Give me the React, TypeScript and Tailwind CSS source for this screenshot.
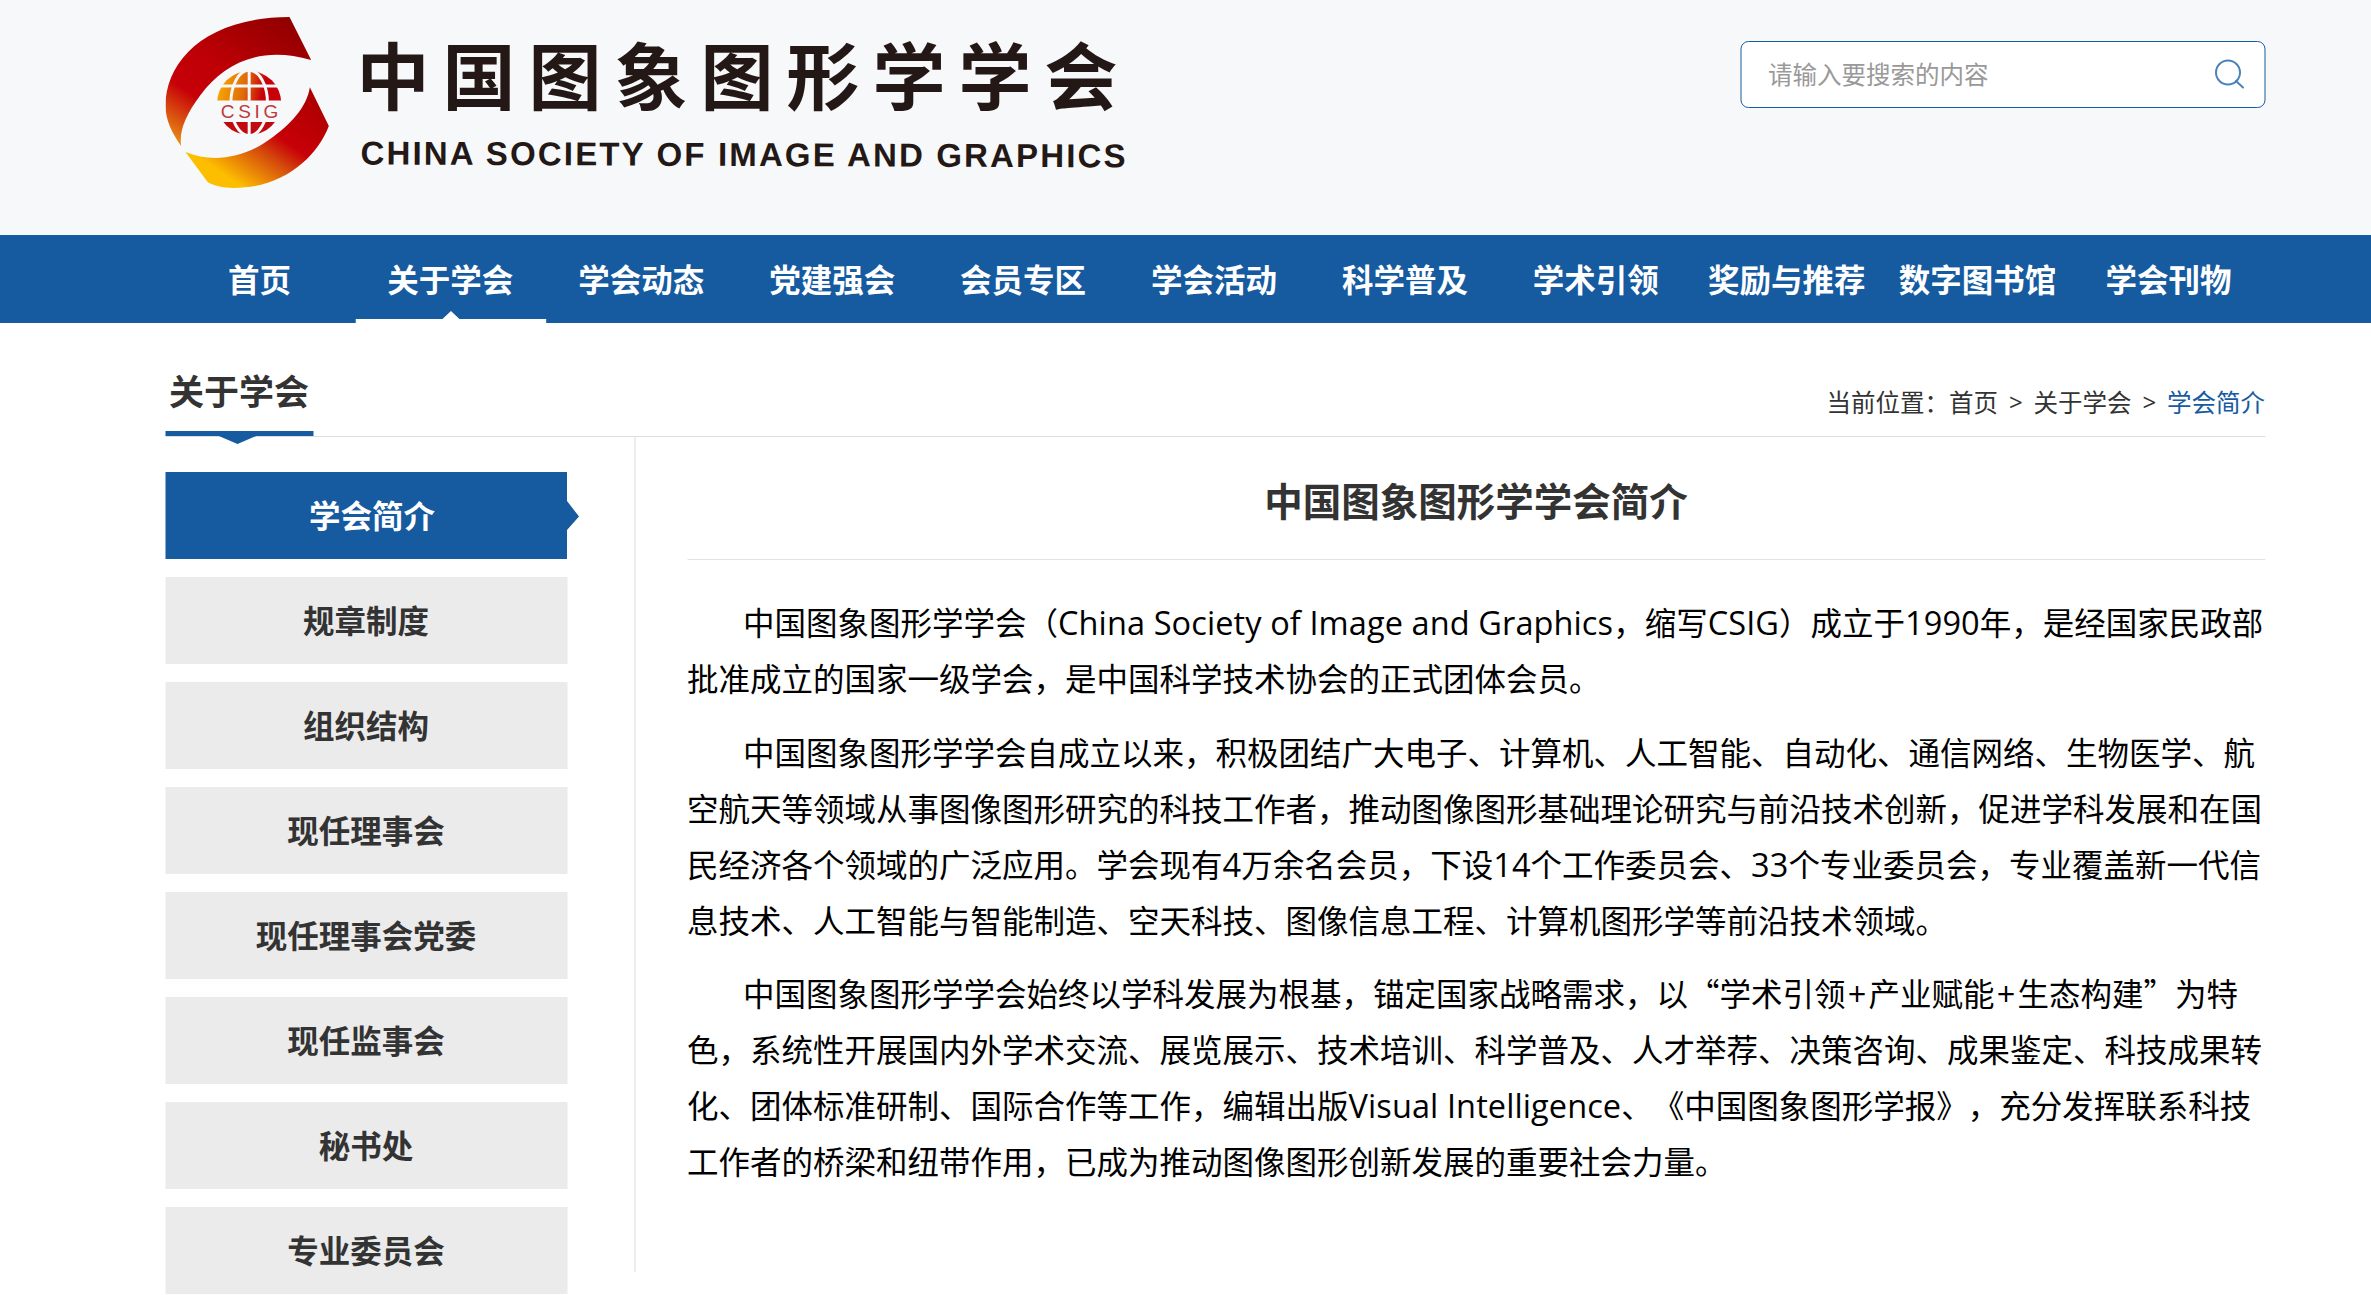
import React from 'react';

const navItems = ['首页', '关于学会', '学会动态', '党建强会', '会员专区', '学会活动', '科学普及', '学术引领', '奖励与推荐', '数字图书馆', '学会刊物'];

const sideItems = ['学会简介', '规章制度', '组织结构', '现任理事会', '现任理事会党委', '现任监事会', '秘书处', '专业委员会'];

function Latin({ children }: { children: React.ReactNode }) {
  return <span className="font-['Open_Sans','Noto_Sans_CJK_SC',sans-serif] text-[32.5px] leading-none tracking-[0.1px]">{children}</span>;
}

function Plus() {
  return <span className="px-[2.2px] font-['Open_Sans',sans-serif] text-[32.5px] leading-none">+</span>;
}

const paragraphs: React.ReactNode[][] = [
  [
    <>中国图象图形学学会（<Latin>China Society of Image and Graphics</Latin>，缩写<Latin>CSIG</Latin>）成立于<Latin>1990</Latin>年，是经国家民政部</>,
    '批准成立的国家一级学会，是中国科学技术协会的正式团体会员。',
  ],
  [
    '中国图象图形学学会自成立以来，积极团结广大电子、计算机、人工智能、自动化、通信网络、生物医学、航',
    '空航天等领域从事图像图形研究的科技工作者，推动图像图形基础理论研究与前沿技术创新，促进学科发展和在国',
    <>民经济各个领域的广泛应用。学会现有<Latin>4</Latin>万余名会员，下设<Latin>14</Latin>个工作委员会、<Latin>33</Latin>个专业委员会，专业覆盖新一代信</>,
    '息技术、人工智能与智能制造、空天科技、图像信息工程、计算机图形学等前沿技术领域。',
  ],
  [
    <>中国图象图形学学会始终以学科发展为根基，锚定国家战略需求，以“学术引领<Plus />产业赋能<Plus />生态构建”为特</>,
    '色，系统性开展国内外学术交流、展览展示、技术培训、科学普及、人才举荐、决策咨询、成果鉴定、科技成果转',
    <>化、团体标准研制、国际合作等工作，编辑出版<Latin>Visual Intelligence</Latin>、《中国图象图形学报》，充分发挥联系科技</>,
    '工作者的桥梁和纽带作用，已成为推动图像图形创新发展的重要社会力量。',
  ],
];

function Logo() {
  return (
    <svg className="block h-[200px] w-[1000px]" viewBox="0 0 1000 200">
      <defs>
        <linearGradient id="upper" gradientUnits="userSpaceOnUse" x1="400" y1="60" x2="130" y2="460">
          <stop offset="0" stopColor="#930000" />
          <stop offset="0.45" stopColor="#bd0005" />
          <stop offset="0.7" stopColor="#c60008" />
          <stop offset="1" stopColor="#e88a14" />
        </linearGradient>
        <linearGradient id="lower" gradientUnits="userSpaceOnUse" x1="470" y1="290" x2="270" y2="580">
          <stop offset="0" stopColor="#ae0000" />
          <stop offset="0.42" stopColor="#c80008" />
          <stop offset="0.6" stopColor="#d4480c" />
          <stop offset="0.95" stopColor="#fdbe00" />
        </linearGradient>
        <linearGradient id="globe" gradientUnits="userSpaceOnUse" x1="215" y1="240" x2="370" y2="270">
          <stop offset="0" stopColor="#f6a000" />
          <stop offset="0.45" stopColor="#e06a0a" />
          <stop offset="0.8" stopColor="#c80008" />
        </linearGradient>
        <clipPath id="cap">
          <rect x="190" y="205" width="220" height="97" />
        </clipPath>
        <clipPath id="base">
          <rect x="190" y="366" width="220" height="50" />
        </clipPath>
      </defs>
      <g transform="translate(-15 0) scale(0.33333)">
        <path fill="url(#upper)" d="M417 51L482 180C330 135 220 190 150 285C105 345 85 395 92 438C65 400 45 360 45 318C45 180 170 51 417 51Z" />
        <path fill="url(#lower)" d="M478 262L535 378C500 470 400 564 250 564C215 564 190 557 172 547L105 456C180 488 270 475 340 430C420 378 470 320 478 262Z" />
        <circle cx="296" cy="309" r="96" fill="url(#globe)" clipPath="url(#cap)" />
        <circle cx="296" cy="309" r="96" fill="#c00a10" clipPath="url(#base)" />
        <g fill="none" stroke="#f6f8fa" strokeWidth="9">
          <path d="M296 205V302M296 362V410M195 258H400" />
          <ellipse cx="296" cy="309" rx="55" ry="98" />
        </g>
        <rect x="195" y="302" width="205" height="64" fill="#f6f8fa" />
        <text x="211" y="355" fontSize="57" textLength="172" fill="#bf3a3c" fontFamily="Liberation Sans, sans-serif">CSIG</text>
      </g>
      <g fill="#231815">
        <text x="191" y="104" fontSize="73" fontWeight="700" textLength="761" fontFamily="Noto Sans CJK SC, sans-serif">中国图象图形学学会</text>
        <text x="195" y="164.500" fontSize="33" fontWeight="700" textLength="765" transform="rotate(0.22 195 165)" fontFamily="Liberation Sans, sans-serif">CHINA SOCIETY OF IMAGE AND GRAPHICS</text>
      </g>
    </svg>
  );
}

export default function App() {
  return (
    <div className="h-[1295px] w-full overflow-hidden bg-white font-['Noto_Sans_CJK_SC',sans-serif] text-[#333] [text-spacing-trim:space-all]">
      <header className="h-[235px] bg-[#f6f8fa]">
        <div className="mx-auto flex w-[2100px] translate-x-[29.5px] justify-between">
          <Logo />
          <div className="mt-[41px] flex h-[67px] w-[525px] items-center justify-between rounded-[8px] border border-[#165aa0] bg-white pr-[20px] pb-[2px] pl-[27px]">
            <span className="text-[24.5px] leading-[36px] text-[#999]">请输入要搜索的内容</span>
            <svg className="size-[30px]" viewBox="0 0 30 30" fill="none" stroke="#4a82bb" strokeWidth="2">
              <ellipse cx="13.5" cy="13.5" rx="12" ry="12" />
              <path d="M21.5 22L28.5 28.5" strokeLinecap="round" />
            </svg>
          </div>
        </div>
      </header>

      <nav className="h-[88px] bg-[#165aa0]">
        <ul className="mx-auto grid h-full w-[2100px] translate-x-[29.5px] grid-cols-11">
          {navItems.map((t, i) => (
            <li key={t} className="relative flex items-center justify-center text-[31.5px] font-bold whitespace-nowrap text-white">
              <span className="-translate-x-[1px]">{t}</span>
              {i === 1 && (
                <svg className="absolute bottom-0 left-0 h-[12px] w-full" viewBox="0 0 191 12" preserveAspectRatio="none" fill="#fff">
                  <path d="M0 8H87L95.500 0L104 8H191V12H0Z" />
                </svg>
              )}
            </li>
          ))}
        </ul>
      </nav>

      <main className="mx-auto w-[2100px] translate-x-[29.5px]">
        <div className="flex h-[114px] items-end justify-between border-b border-[#ddd]">
          <h2 className="relative flex h-[112px] w-[148px] items-center justify-center border-b-[5px] border-[#165aa0] pt-[28px] text-[35px] font-bold whitespace-nowrap">
            <span className="-translate-y-[1px]">关于学会</span>
            <svg className="absolute top-[111px] left-[51px] h-[10px] w-[42px]" viewBox="0 0 42 10" fill="#165aa0">
              <path d="M0 0H42L21 9Z" />
            </svg>
          </h2>
          <div className="flex pb-[16px] text-[24.5px] leading-[36px]">
            <span>当前位置：</span>
            <span>首页</span>
            <span className="w-[35.500px] text-center font-['Open_Sans',sans-serif] text-[24px]">&gt;</span>
            <span>关于学会</span>
            <span className="w-[35.500px] text-center font-['Open_Sans',sans-serif] text-[24px]">&gt;</span>
            <span className="text-[#165aa0]">学会简介</span>
          </div>
        </div>

        <div className="flex">
          <aside className="h-[835px] w-[470px] shrink-0 border-r border-[#ddd] pt-[35px]">
            <ul className="flex flex-col gap-[18px]">
              {sideItems.map((t, i) =>
                i === 0 ? (
                  <li key={t} className="flex h-[87px] w-[414px] items-center justify-center bg-[#165aa0] pb-[2px] text-[31.5px] font-bold text-white [clip-path:polygon(0_0,402px_0,402px_29px,414px_44.5px,402px_58px,402px_100%,0_100%)]">
                    {t}
                  </li>
                ) : (
                  <li key={t} className="flex h-[87px] w-[402px] items-center justify-center bg-[#ebebeb] pb-[2px] text-[31.5px] font-bold">
                    {t}
                  </li>
                ),
              )}
            </ul>
          </aside>

          <article className="ml-[52px] w-[1578px]">
            <h1 className="flex h-[123px] items-center justify-center border-b border-[#e3e3e3] pt-[4px] text-[38.5px] font-bold">中国图象图形学学会简介</h1>
            <div className="mt-[33px] flex flex-col gap-[17.5px] text-[31.5px] leading-[56px] whitespace-nowrap text-black">
              {paragraphs.map((lines, p) => (
                <p key={p} className="indent-[56px]">
                  {lines.map((line, l) => (
                    <span key={l} className={l === 0 ? 'block' : 'block indent-0'}>{line}</span>
                  ))}
                </p>
              ))}
            </div>
          </article>
        </div>
      </main>
    </div>
  );
}
